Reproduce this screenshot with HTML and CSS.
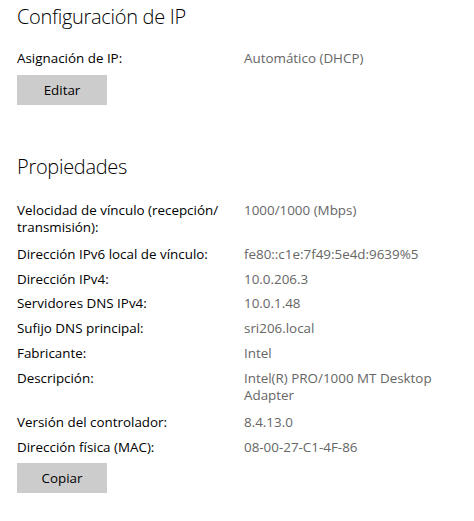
FILE: index.html
```html
<!DOCTYPE html>
<html lang="es">
<head>
<meta charset="utf-8">
<link rel="stylesheet" href="styles.css">
</head>
<body>
<main class="page">
  <section class="section ip-section">
    <h1 class="heading">Configuración de IP</h1>
    <div class="props">
      <div class="row"><div class="label">Asignación de IP:</div><div class="value">Automático (DHCP)</div></div>
    </div>
    <button class="btn">Editar</button>
  </section>
  <section class="section prop-section">
    <h1 class="heading">Propiedades</h1>
    <div class="props">
      <div class="row row-wrap"><div class="label">Velocidad de vínculo (recepción/ transmisión):</div><div class="value">1000/1000 (Mbps)</div></div>
      <div class="row"><div class="label">Dirección IPv6 local de vínculo:</div><div class="value">fe80::c1e:7f49:5e4d:9639%5</div></div>
      <div class="row"><div class="label">Dirección IPv4:</div><div class="value">10.0.206.3</div></div>
      <div class="row"><div class="label">Servidores DNS IPv4:</div><div class="value">10.0.1.48</div></div>
      <div class="row"><div class="label">Sufijo DNS principal:</div><div class="value">sri206.local</div></div>
      <div class="row"><div class="label">Fabricante:</div><div class="value">Intel</div></div>
      <div class="row row-wrap"><div class="label">Descripción:</div><div class="value">Intel(R) PRO/1000 MT Desktop Adapter</div></div>
      <div class="row"><div class="label">Versión del controlador:</div><div class="value">8.4.13.0</div></div>
      <div class="row"><div class="label">Dirección física (MAC):</div><div class="value">08-00-27-C1-4F-86</div></div>
    </div>
    <button class="btn">Copiar</button>
  </section>
</main>
</body>
</html>
```

FILE: styles.css
```css
html, body {
  margin: 0;
  padding: 0;
  background: #ffffff;
}
body {
  font-family: "Open Sans", "Noto Sans", "Liberation Sans", sans-serif;
  color: #000;
}
.page {
  padding: 4px 0 0 17px;
  width: 457px;
  box-sizing: border-box;
}
.heading {
  margin: 0;
  font-size: 20px;
  font-weight: 300;
  line-height: 26px;
  letter-spacing: -0.3px;
}
.ip-section .heading {
  margin-bottom: 20px;
}
.prop-section {
  margin-top: 49px;
}
.prop-section .heading {
  margin-bottom: 22px;
}
.props {
  display: flex;
  flex-direction: column;
}
.row {
  display: grid;
  grid-template-columns: 227px 200px;
  font-size: 13.4px;
  line-height: 17px;
  padding-bottom: 7.8px;
}
.row-wrap {
  padding-bottom: 10px;
}
.label {
  color: #000;
  padding-right: 6px;
}
.value {
  color: #666;
}
.btn {
  display: block;
  width: 90px;
  height: 30px;
  margin-top: 0;
  border: none;
  background: #cccccc;
  color: #000;
  font-family: inherit;
  font-size: 13.4px;
  padding: 0;
}
```
